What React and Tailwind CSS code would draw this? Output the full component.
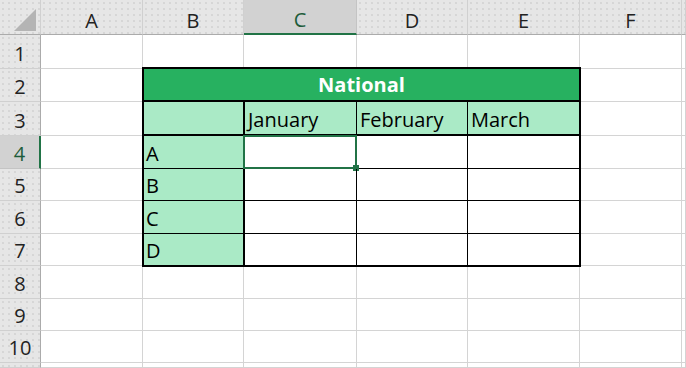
const COLS = ['A', 'B', 'C', 'D', 'E', 'F', 'G'];
const ROWS = [1, 2, 3, 4, 5, 6, 7, 8, 9, 10, 11];
const MONTHS = ['January', 'February', 'March'];
const REGIONS = ['A', 'B', 'C', 'D'];

const headBg =
  'bg-[#e6e6e6] bg-[radial-gradient(#d6d6d6_0.7px,transparent_0.9px)] bg-[length:6px_6px]';

function Corner() {
  return (
    <div className={`${headBg} border-r border-r-[#d0d0d0] border-b border-b-[#ababab] flex items-end justify-end pr-[3px] pb-[2px]`}>
      <svg width="23" height="23" viewBox="0 0 23 23">
        <polygon points="22,0 22,22 0,22" fill="#b4b4b4" />
      </svg>
    </div>
  );
}

function ColHead({ label }) {
  const active = label === 'C';
  return (
    <div
      className={
        active
          ? 'bg-[#d2d2d2] border-r border-r-[#c4c4c4] border-b-2 border-b-[#217346] text-[#1d5c3a] flex items-end justify-center'
          : `${headBg} border-r border-r-[#d0d0d0] border-b border-b-[#ababab] text-[#222] flex items-end justify-center`
      }
    >
      {label !== 'G' && label}
    </div>
  );
}

function RowHead({ n }) {
  const active = n === 4;
  return (
    <div
      className={
        active
          ? 'bg-[#d2d2d2] border-r-2 border-r-[#217346] border-b border-b-[#c4c4c4] text-[#1d5c3a] flex items-end justify-center pb-px'
          : `${headBg} border-r border-r-[#ababab] border-b border-b-[#d0d0d0] text-[#222] flex items-end justify-center pb-px`
      }
    >
      {n}
    </div>
  );
}

function Blank() {
  return <div className="bg-white border-r border-b border-[#d4d4d4]" />;
}

function Table() {
  return (
    <div className="col-start-3 col-span-4 row-start-3 row-span-6 -ml-px -mt-[2px] -mr-px -mb-px border-2 border-black relative z-10 bg-white">
      <div className="grid h-full grid-cols-[101px_112px_111px_111px] grid-rows-[33px_34px_33px_32px_33px_31px]">
        <div className="col-span-4 bg-[#27b160] border-b-2 border-black text-white font-bold flex items-center justify-center">
          National
        </div>

        <div className="bg-[#aaeac6] border-r-2 border-b-2 border-black" />
        {MONTHS.map((m, i) => (
          <div
            key={m}
            className={`bg-[#aaeac6] border-b-2 border-black flex items-end pb-px pl-[3px] ${i < 2 ? 'border-r' : ''}`}
          >
            {m}
          </div>
        ))}

        {REGIONS.map((r, ri) => (
          <Region key={r} label={r} last={ri === REGIONS.length - 1} selected={ri === 0} />
        ))}
      </div>
    </div>
  );
}

function Region({ label, last, selected }) {
  const bottom = last ? '' : 'border-b';
  return (
    <>
      <div className={`bg-[#aaeac6] border-r-2 border-black flex items-end pb-px pl-[2px] ${bottom}`}>
        {label}
      </div>
      <div className={`relative border-r border-black ${bottom}`}>
        {selected && (
          <>
            <div className="absolute -left-[2px] -top-px -right-px -bottom-px border-2 border-[#217346]" />
            <div className="absolute -right-[3px] -bottom-[3px] w-[6px] h-[6px] bg-[#217346]" />
          </>
        )}
      </div>
      <div className={`border-r border-black ${bottom}`} />
      <div className={`border-black ${bottom}`} />
    </>
  );
}

export default function App() {
  return (
    <div className="w-[686px] h-[368px] overflow-hidden bg-white font-['Open_Sans',sans-serif] text-[20px] leading-[27px] text-black">
      <div className="grid h-full grid-cols-[41px_102px_101px_113px_111px_112px_102px_1fr] grid-rows-[35px_34px_33px_34px_33px_32px_33px_32px_33px_32px_32px_1fr]">
        <Table />
        <Corner />
        {COLS.map((c) => (
          <ColHead key={c} label={c} />
        ))}
        {ROWS.map((n) => (
          <Row key={n} n={n} />
        ))}
      </div>
    </div>
  );
}

function Row({ n }) {
  const inTable = n >= 2 && n <= 7;
  return (
    <>
      <RowHead n={n <= 10 ? n : ''} />
      {COLS.map((c) =>
        inTable && ['B', 'C', 'D', 'E'].includes(c) ? null : <Blank key={c} />
      )}
    </>
  );
}
